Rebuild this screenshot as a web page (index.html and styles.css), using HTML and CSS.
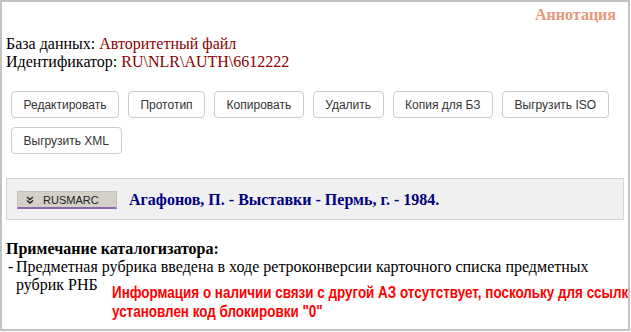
FILE: index.html
```html
<!DOCTYPE html>
<html lang="ru">
<head>
    <meta charset="UTF-8">
    <meta name="viewport" content="width=device-width, initial-scale=1.0">
    <title>Авторитетный файл</title>
    <link rel="stylesheet" href="styles.css">
</head>
<body>
    <div class="record">
        <div class="record-top">
            <a class="annotation" href="#">Аннотация</a>
        </div>

        <div class="info">
            <div>База данных: <span class="value">Авторитетный файл</span></div>
            <div>Идентификатор: <span class="value">RU\NLR\AUTH\6612222</span></div>
        </div>

        <div class="actions">
            <button class="btn">Редактировать</button>
            <button class="btn">Прототип</button>
            <button class="btn">Копировать</button>
            <button class="btn">Удалить</button>
            <button class="btn">Копия для БЗ</button>
            <button class="btn">Выгрузить ISO</button>
            <button class="btn">Выгрузить XML</button>
        </div>

        <div class="heading-bar">
            <button class="marc-toggle">
                <svg class="marc-icon" width="8" height="8" viewBox="0 0 8 8">
                    <polyline points="1,1 4,3.5 7,1" fill="none" stroke="#222" stroke-width="1.4"/>
                    <polyline points="1,4.5 4,7 7,4.5" fill="none" stroke="#222" stroke-width="1.4"/>
                </svg>
                RUSMARC
            </button>
            <span class="heading-title">Агафонов, П. - Выставки - Пермь, г. - 1984.</span>
        </div>

        <div class="note">
            <div class="note-title">Примечание каталогизатора:</div>
            <div class="note-item">
                <span class="dash">-</span>
                <div class="note-text">Предметная рубрика введена в ходе ретроконверсии карточного списка предметных рубрик РНБ <span class="warning">Информация о наличии связи с другой АЗ отсутствует, поскольку для ссылки<br>установлен код блокировки "0"</span></div>
            </div>
        </div>
    </div>
</body>
</html>
```

FILE: styles.css
```css
* {
    margin: 0;
    padding: 0;
    box-sizing: border-box;
}

body {
    font-family: "Liberation Serif", "Times New Roman", serif;
    font-size: 16px;
    color: #000;
    background: #fff;
}

.record {
    width: 630px;
    height: 331px;
    border: 2px solid #c3c3c3;
    padding: 4px;
    overflow: hidden;
}

.record-top {
    text-align: right;
    padding-right: 8px;
}

.annotation {
    font-weight: bold;
    color: #e9967a;
    text-decoration: none;
}

.info {
    margin-top: 11px;
}

.value {
    color: #8b0000;
}

.actions {
    display: flex;
    flex-wrap: wrap;
    gap: 9px;
    padding-left: 5px;
    margin-top: 20px;
}

.btn {
    height: 27px;
    padding: 0 11.5px;
    font-family: "Liberation Sans", Arial, sans-serif;
    font-size: 12px;
    color: #333;
    background: #fff;
    border: 1px solid #ccc;
    border-radius: 4px;
    cursor: pointer;
}

.heading-bar {
    display: flex;
    align-items: center;
    margin-top: 24px;
    padding: 12px 10px 10px;
    background-color: #f0f0f0;
    border: 1px solid #d4d4d4;
}

.marc-toggle {
    display: flex;
    align-items: center;
    width: 100px;
    height: 18px;
    padding-left: 8px;
    font-family: "Liberation Sans", Tahoma, sans-serif;
    font-size: 11px;
    color: #222;
    background-color: #d4d0c8;
    border: 1px solid #c6c2ba;
    border-bottom: 2px solid #8a6aae;
}

.marc-icon {
    margin-right: 9px;
}

.heading-title {
    margin-left: 12px;
    font-weight: bold;
    color: #000080;
}

.note {
    margin-top: 20px;
}

.note-title {
    font-weight: bold;
}

.note-item {
    display: flex;
    padding-left: 2px;
}

.dash {
    flex: 0 0 8px;
}

/* no narrow face installed, so the condensed look is made by scaling */
.warning {
    display: inline-block;
    vertical-align: top;
    width: 500px;
    margin-top: 7px;
    margin-left: 10px;
    white-space: nowrap;
    font-family: "Liberation Sans", Arial, sans-serif;
    font-weight: bold;
    font-size: 17px;
    line-height: 19px;
    color: #ff0000;
    transform: scaleX(0.79);
    transform-origin: left top;
}
```
